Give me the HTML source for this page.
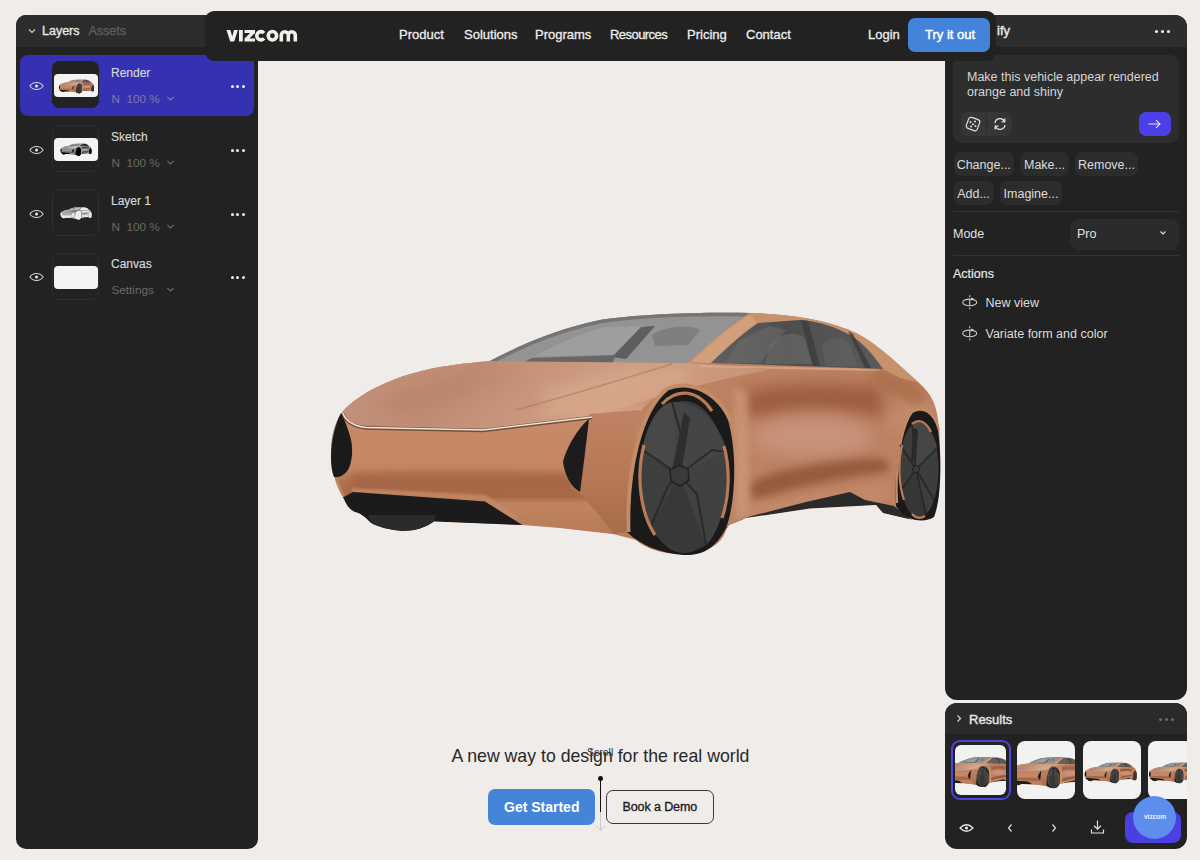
<!DOCTYPE html>
<html><head><meta charset="utf-8">
<style>
*{box-sizing:border-box;margin:0;padding:0}
html,body{width:1200px;height:860px;overflow:hidden}
body{background:#efece9;font-family:"Liberation Sans",sans-serif;position:relative;color:#e6e6e6}
.abs{position:absolute}
.panel{position:absolute;background:#222222;overflow:hidden}
#left{left:16px;top:15px;width:242px;height:834px;border-radius:10px}
#left .hdr{position:absolute;left:0;top:0;width:100%;height:32px;background:#2c2c2d}
.t{position:absolute;white-space:nowrap;line-height:1}
.row{position:absolute;left:4px;width:234px;height:61px;border-radius:8px}
.row.sel{background:#3432b2}
.thumb{position:absolute;left:32px;top:6px;width:47px;height:47px;border-radius:7px;border:1px solid #2e2e2e}
.sel .thumb{background:#222;border-color:#222}
.timg{position:absolute;left:1px;top:12px;width:44px;height:23px;border-radius:4px;background:#f4f4f4;overflow:hidden}
.rname{left:91px;top:11.5px;font-size:12px;color:#d8d8d8;-webkit-text-stroke:0.15px #d8d8d8}
.rsub{left:91.5px;top:37.5px;font-size:11.7px;color:#6a6a6a}
.sel .rsub{color:#7c79a6}
.dots{position:absolute;width:18px;height:4px}
.dots i{position:absolute;top:0;width:3.3px;height:3.3px;border-radius:50%;background:#f0f0f0}
#nav{left:205px;top:11px;width:791px;height:50px;border-radius:9px;background:#222222}
.navl{top:17px;font-size:13px;color:#ececec;-webkit-text-stroke:0.3px #ececec}
#try{position:absolute;left:703px;top:7px;width:82px;height:34px;border-radius:7px;background:#4384da}
#right{left:945px;top:15px;width:242px;height:685px;border-radius:12px}
#right .hdr{position:absolute;left:0;top:0;width:100%;height:32px;background:#2d2d2e}
#results{left:945px;top:703px;width:242px;height:146px;border-radius:12px}
#results .hdr{position:absolute;left:0;top:0;width:100%;height:31px;background:#2a2a2b}
.chip{position:absolute;height:24px;border-radius:7px;background:#2c2c2c;font-size:12.5px;color:#dcdcdc;padding-top:6px;text-align:center}
.divider{position:absolute;left:8px;width:226px;height:1px;background:#333}
</style></head><body>

<!-- CAR -->
<svg class="abs" style="left:0;top:0" width="1200" height="860" viewBox="0 0 1200 860">
<defs>
 <linearGradient id="gHood" x1="0" y1="0" x2="1" y2="0.15">
  <stop offset="0" stop-color="#c39079"/><stop offset="0.35" stop-color="#c08d76"/><stop offset="0.7" stop-color="#cf9f84"/><stop offset="1" stop-color="#c99477"/>
 </linearGradient>
 <linearGradient id="gFace" x1="0" y1="0" x2="0" y2="1">
  <stop offset="0" stop-color="#c78a69"/><stop offset="0.45" stop-color="#c48663"/><stop offset="0.55" stop-color="#b0714f"/><stop offset="0.68" stop-color="#a66846"/><stop offset="0.74" stop-color="#c08462"/><stop offset="1" stop-color="#b87b5a"/>
 </linearGradient>
 <linearGradient id="gGlass" x1="0" y1="0" x2="0.3" y2="1">
  <stop offset="0" stop-color="#9a9a9a"/><stop offset="1" stop-color="#7c7c7c"/>
 </linearGradient>
 <linearGradient id="gWin" x1="0" y1="0" x2="1" y2="0">
  <stop offset="0" stop-color="#606060"/><stop offset="0.45" stop-color="#4e4e4e"/><stop offset="1" stop-color="#5a5a5a"/>
 </linearGradient>
 <radialGradient id="gWheel" cx="0.45" cy="0.4" r="0.7">
  <stop offset="0" stop-color="#414141"/><stop offset="1" stop-color="#2f2f2f"/>
 </radialGradient>
 <linearGradient id="gFender" x1="0" y1="0" x2="0" y2="1"><stop offset="0" stop-color="#bf8262"/><stop offset="0.5" stop-color="#b77a59"/><stop offset="1" stop-color="#a66b4a"/></linearGradient>
 <filter id="blur8" x="-40%" y="-40%" width="180%" height="180%"><feGaussianBlur stdDeviation="9"/></filter>
 <filter id="blur4" x="-40%" y="-40%" width="180%" height="180%"><feGaussianBlur stdDeviation="4"/></filter>
 <linearGradient id="gFtop" x1="0" y1="0" x2="0" y2="1"><stop offset="0" stop-color="#d4a385" stop-opacity="0"/><stop offset="1" stop-color="#d6a687" stop-opacity="0.9"/></linearGradient>
 <filter id="blur1" x="-10%" y="-50%" width="120%" height="200%"><feGaussianBlur stdDeviation="1.2"/></filter>
 <filter id="blur3" x="-30%" y="-30%" width="160%" height="160%"><feGaussianBlur stdDeviation="3"/></filter>
 <filter id="blur6" x="-40%" y="-40%" width="180%" height="180%"><feGaussianBlur stdDeviation="7"/></filter>
 <clipPath id="cBody"><path d="M331,457 C330,435 336,418 345,409 C362,392 395,375 440,367 C465,363 480,362 490,361 C520,345 560,328 600,320 C640,314 700,312 750,313 C790,314 830,320 858,334 C880,346 900,366 918,382 C932,394 936,405 938,420 C941,440 941,480 938,500 C935,512 928,519 918,519 L911,519.5 L883,513 L876,505 L810,508.5 L746,518 L729,525 L726,530 C722,545 705,554 683,554 C660,554 645,548 636,540 L613,534 L560,528 L522,525 L434,521.5 C425,528 415,531 402,531 C390,530 378,527 371,523 C366,518 362,514 355,512 C350,510 347,506 344,499 C338,490 333,478 331,457 Z"/></clipPath>
</defs>
<g id="car">
<g clip-path="url(#cBody)">
<rect x="320" y="300" width="630" height="260" fill="#bd8262"/>
<!-- hood top -->
<path fill="url(#gHood)" d="M330,412 C360,390 395,372 440,365 C465,361 480,360 490,359 L688,363 L730,366 L770,370 C720,378 665,395 640,402 C620,409 600,414 591,417 L483,430 C440,428 390,426 345,424 Z"/>
<path fill="#dcae90" opacity="0.55" filter="url(#blur6)" d="M540,392 C580,378 630,368 700,370 C670,386 630,402 595,410 L550,412 Z"/>
<path fill="#a97354" opacity="0.3" filter="url(#blur8)" d="M380,400 C420,382 470,372 520,370 C480,386 440,400 400,418 Z"/>
<path fill="#d6a687" opacity="0.7" filter="url(#blur3)" d="M525,415 C580,400 630,385 680,370 L690,380 C650,395 620,410 595,416 Z"/>
<path fill="none" stroke="#a36a4a" stroke-width="1.4" opacity="0.45" d="M516,410 C560,398 620,380 672,364"/>
<!-- front face -->
<path fill="url(#gFace)" d="M338,420 L360,427 L483,431 L591,417 C580,430 566,450 563,468 C566,480 572,488 578,492 C600,505 620,515 629,532 L613,534 L520,523 L485,504 L420,498 L345,496 C336,480 333,450 338,420 Z"/>
<path fill="#9c603f" opacity="0.55" filter="url(#blur3)" d="M352,472 C420,470 500,470 566,472 L576,488 C520,490 420,490 352,489 Z"/>
<!-- fender block -->
<path fill="url(#gFtop)" d="M560,400 C600,392 640,386 672,383 C660,392 648,402 641,411 L589,414 L575,415 Z"/>
<path fill="#9f6543" opacity="0.55" filter="url(#blur3)" d="M600,470 L628,470 L628,532 L603,520 Z"/>
<!-- fender highlight right of intake -->
<path fill="url(#gFender)" d="M589,414 L640,410 C633,440 628,480 628,532 L613,534 C605,520 590,505 578,492 C580,470 584,440 589,414 Z"/>

<!-- shoulder shadow -->
<path fill="#8e4d2f" opacity="0.75" filter="url(#blur8)" d="M745,392 C790,382 870,382 910,396 C915,410 905,418 880,416 C840,410 790,408 755,418 C740,415 738,400 745,392 Z"/>
<!-- light door panel -->
<ellipse cx="812" cy="436" rx="62" ry="21" fill="#c99680" opacity="0.85" filter="url(#blur8)"/>
<!-- sculpt shadow -->
<path fill="#8a4d31" opacity="0.75" filter="url(#blur4)" d="M752,482 C780,468 830,460 878,458 C888,460 892,466 888,472 C850,476 800,486 755,500 C748,496 748,488 752,482 Z"/>
<!-- sill highlight -->
<path fill="#c58d6d" opacity="0.7" filter="url(#blur4)" d="M748,506 C790,497 840,489 885,484 L893,500 L748,517 Z"/>
<!-- fender strip behind front wheel -->
<path fill="#cf9a78" opacity="0.7" filter="url(#blur3)" d="M733,388 L748,392 L750,515 L735,520 Z"/>
<!-- rear haunch highlight -->
<path fill="#d3a080" opacity="0.55" filter="url(#blur6)" d="M880,390 C905,392 925,398 932,410 L920,420 L885,430 Z"/>
<!-- beltline light -->
<path fill="none" stroke="#d9aa8a" stroke-width="2" opacity="0.8" d="M700,366 L880,370"/>
<path fill="#c38966" opacity="0.85" filter="url(#blur1)" d="M352,488 L486,495 L520,518 L510,520 L485,501.5 L352,493 Z"/>
<path fill="#a66a47" opacity="0.6" filter="url(#blur4)" d="M878,366 C895,370 915,380 928,395 L918,408 C900,396 885,388 868,380 Z"/>
<!-- front-left underbody black -->
<path fill="#1b1b1b" d="M340,499 L353,492 L485,501.5 L524,526 L434,521.5 C425,528 415,531 402,531 C390,530 378,527 371,523 C366,518 362,514 355,512 C350,510 347,506 340,499 Z"/>
<path fill="#2b2b2b" d="M368,515 L436,515 L434,521.5 C425,528 415,531 402,531 C390,530 378,527 371,523 Z"/>
<!-- rocker dark -->
<path fill="#2a2a2a" d="M726,530 L729,525 L748,517 L806,502 L850,492 L865,500 L894,506 L911,520 L883,513 L876,505 L810,508.5 L746,518 Z"/>
</g>
<!-- left intake -->
<path fill="#1a1a1a" d="M341,413 C336,422 331,440 331,457 C331,466 332,472 334,477 C340,478 346,474 349,468 C353,458 353,446 350,436 C347,426 344,418 341,413 Z"/>
<!-- right intake -->
<path fill="#1c1c1c" d="M589,419 C578,428 566,448 563,462 C565,476 571,487 580,492 C583,470 586,445 589,419 Z"/>
<!-- chrome strip -->
<path fill="none" stroke="#5e3f30" stroke-width="3.4" opacity="0.8" d="M343,414 C346,422 355,427 366,428 L483,430.5 L592,417.5"/>
<path fill="none" stroke="#eee4d9" stroke-width="1.6" d="M343,413.5 C346,421.5 355,426.5 366,427.5 L483,430 L592,417"/>
<!-- windshield glass -->
<clipPath id="cGlass"><path d="M490,361 C520,345 560,328 600,320 C640,314 700,312 750,313 C735,322 710,342 688,363 Z"/></clipPath>
<g clip-path="url(#cGlass)">
<rect x="480" y="305" width="280" height="60" fill="#939393"/>
<path fill="none" stroke="#757575" stroke-width="7" d="M490,361 C520,345 560,328 600,320 C640,314 700,312 750,313"/>
<path fill="#a3a3a3" opacity="0.7" d="M535,356 C560,342 585,332 605,327 L645,326 L618,355 Z"/>
<path fill="#5e5e5e" d="M612,357 L641,327 L655,326 L626,359 Z"/>
<path fill="#676767" d="M532,358 L616,355 L612,364 L520,364 Z"/>
<path fill="#7a7a7a" opacity="0.8" d="M652,335 C665,326 690,324 700,330 L688,345 L655,346 Z"/>
</g>
<!-- roof rail copper -->
<path fill="#c7916c" d="M688,363 C710,342 735,322 750,313 C790,314 830,320 858,334 C880,346 900,366 918,382 L900,378 L883,369 C870,350 858,338 844,332 C830,325 815,321 800,320 L758,323 C740,335 725,350 711,363 Z"/>
<path fill="#d4a282" opacity="0.8" d="M692,362 C712,342 736,322 750,315 L757,322 C740,335 724,350 710,363 Z"/>
<!-- side window -->
<path fill="url(#gWin)" d="M711,363 C725,350 740,335 758,323 L800,320 C815,321 830,325 844,332 C858,338 870,350 883,369 Z"/>
<path fill="#3a3a3a" opacity="0.7" d="M801,320 L808,321 L820,366 L813,366 Z"/>
<path fill="#707070" opacity="0.45" d="M740,340 L770,326 L786,330 L760,363 L725,363 Z"/>
<path fill="#6a6a6a" opacity="0.6" d="M770,345 C780,332 800,330 805,340 L812,364 L765,364 Z"/>
<path fill="#3c3c3c" opacity="0.8" d="M848,331 L853,334 L871,368 L865,368 Z"/>
<path fill="#656565" opacity="0.5" d="M822,345 C830,336 845,336 850,345 L858,366 L825,366 Z"/>
<!-- front wheel arch/gap -->
<path fill="#1a1a1a" d="M627,532 C625,470 640,410 668,388 C690,380 715,390 728,420 C738,455 735,505 726,528 C715,550 700,556 683,555 C660,553 640,545 627,532 Z"/>
<path fill="none" stroke="#c48b67" stroke-width="4" d="M628.5,532 C626.5,470 640.5,410 667.5,388.5 C690,380 717,391 731,421"/>
<ellipse cx="684" cy="477" rx="43" ry="76" fill="#3a3a3a"/>
<path fill="#454545" d="M679,475 L672,402 C700,400 720,425 727,452 Z"/>
<path fill="#414141" d="M679,475 L727,452 C730,490 722,530 706,545 Z"/>
<path fill="#383838" d="M679,475 L706,545 C690,556 665,548 650,528 Z"/>
<path fill="#3e3e3e" d="M679,475 L650,528 C640,505 638,475 642,450 Z"/>
<path fill="#484848" d="M679,475 L642,450 C648,420 660,404 672,402 Z"/>
<path fill="none" stroke="#2a2a2a" stroke-width="2" d="M679,475 L684,445 L672,402 M679,475 L712,450 L727,452 M679,475 L697,494 L706,545 M679,475 L668,486 L650,528 M679,475 L649,454 L642,450"/>
<path fill="#2e2e2e" d="M684,412 L690,418 L682,468 L672,470 Z"/>
<path fill="#3a3a3a" stroke="#222" stroke-width="1.5" d="M679,465 L688,469 L689,480 L680,486 L671,481 L670,470 Z"/>
<path fill="none" stroke="#b97b55" stroke-width="3.2" d="M662,404 A43,76 0 0,1 712,411 M724,446 A43,76 0 0,1 722,518 M655,535 A43,76 0 0,1 644,445"/>
<!-- rear wheel -->
<path fill="#1a1a1a" d="M896,506 C894,470 899,428 912,412 C922,406 934,412 938,430 C942,460 941,500 934,517 C925,523 905,522 896,506 Z"/>
<path fill="none" stroke="#c48b67" stroke-width="2.2" d="M897,503 C895,470 900,428 912,412 C922,406 934,411 939,430"/>
<ellipse cx="919" cy="469.5" rx="19.5" ry="48" fill="#3d3d3d"/>
<path fill="#464646" d="M916,469 L912,423 C925,420 934,432 937,448 Z"/>
<path fill="#363636" d="M916,469 L926,515 C915,520 905,508 901,490 Z"/>
<path fill="none" stroke="#262626" stroke-width="1.6" d="M916,469 L912,423 M916,469 L937,448 M916,469 L934,500 M916,469 L926,515 M916,469 L901,490 M916,469 L900,445"/>
<path fill="#2a2a2a" d="M913,428 L918,430 L916,462 L911,462 Z"/>
<circle cx="916" cy="469" r="3.5" fill="#3a3a3a" stroke="#222" stroke-width="1"/>
<path fill="none" stroke="#b97b55" stroke-width="2.2" d="M912,424 A19.5,48 0 0,1 931,432 M902,445 A19.5,48 0 0,0 904,500 M912,514 A19.5,48 0 0,0 925,516"/>
</g>
</svg>

<!-- LEFT PANEL -->
<div id="left" class="panel">
  <div class="hdr"></div>
  <svg class="abs" style="left:11px;top:12px" width="10" height="8" viewBox="0 0 10 8"><path d="M2 2.5 L5 5.5 L8 2.5" stroke="#cfcfcf" stroke-width="1.2" fill="none"/></svg>
  <div class="t" style="left:26px;top:10px;font-size:12.5px;color:#e8e8e8;-webkit-text-stroke:0.35px #e8e8e8">Layers</div>
  <div class="t" style="left:72.5px;top:10px;font-size:12.5px;color:#5c5c5c;-webkit-text-stroke:0.35px #5c5c5c">Assets</div>
  <div class="row sel" style="top:40px">
    <svg class="abs" style="left:8.5px;top:25.5px" width="15" height="10" viewBox="0 0 15 10"><path d="M0.9 5 C4 0.4 11 0.4 14.1 5 C11 9.6 4 9.6 0.9 5Z" stroke="#d4d4d4" stroke-width="1.1" fill="none"/><circle cx="7.5" cy="5" r="1.5" fill="#e8e8e8"/></svg>
    <div class="thumb"><div class="timg"><svg width="44" height="23" viewBox="246 218 765 400"><use href="#car"/></svg></div></div>
    <div class="t rname">Render</div>
    <div class="t rsub">N&nbsp;&nbsp;100&nbsp;%</div>
    <svg class="abs" style="left:145.5px;top:39.5px" width="9" height="7" viewBox="0 0 9 7"><path d="M1.3 2 L4.5 5 L7.7 2" stroke="#7c79a6" stroke-width="1.1" fill="none"/></svg>
    <div class="dots" style="left:210.5px;top:29.5px"><i style="left:0"></i><i style="left:5.5px"></i><i style="left:11px"></i></div>
  </div>
  <div class="row" style="top:104px">
    <svg class="abs" style="left:8.5px;top:25.5px" width="15" height="10" viewBox="0 0 15 10"><path d="M0.9 5 C4 0.4 11 0.4 14.1 5 C11 9.6 4 9.6 0.9 5Z" stroke="#d4d4d4" stroke-width="1.1" fill="none"/><circle cx="7.5" cy="5" r="1.5" fill="#e8e8e8"/></svg>
    <div class="thumb"><div class="timg"><svg width="44" height="23" viewBox="203 206 864 452" style="filter:grayscale(1) brightness(0.95) contrast(1.8)"><use href="#car"/></svg></div></div>
    <div class="t rname">Sketch</div>
    <div class="t rsub">N&nbsp;&nbsp;100&nbsp;%</div>
    <svg class="abs" style="left:145.5px;top:39.5px" width="9" height="7" viewBox="0 0 9 7"><path d="M1.3 2 L4.5 5 L7.7 2" stroke="#6a6a6a" stroke-width="1.1" fill="none"/></svg>
    <div class="dots" style="left:210.5px;top:29.5px"><i style="left:0"></i><i style="left:5.5px"></i><i style="left:11px"></i></div>
  </div>
  <div class="row" style="top:168px">
    <svg class="abs" style="left:8.5px;top:25.5px" width="15" height="10" viewBox="0 0 15 10"><path d="M0.9 5 C4 0.4 11 0.4 14.1 5 C11 9.6 4 9.6 0.9 5Z" stroke="#d4d4d4" stroke-width="1.1" fill="none"/><circle cx="7.5" cy="5" r="1.5" fill="#e8e8e8"/></svg>
    <div class="thumb"><div class="timg" style="background:transparent"><svg width="44" height="23" viewBox="203 210 864 452" style="filter:grayscale(1) invert(1) brightness(1.6) contrast(1.2);opacity:0.9"><use href="#car"/></svg></div></div>
    <div class="t rname">Layer 1</div>
    <div class="t rsub">N&nbsp;&nbsp;100&nbsp;%</div>
    <svg class="abs" style="left:145.5px;top:39.5px" width="9" height="7" viewBox="0 0 9 7"><path d="M1.3 2 L4.5 5 L7.7 2" stroke="#6a6a6a" stroke-width="1.1" fill="none"/></svg>
    <div class="dots" style="left:210.5px;top:29.5px"><i style="left:0"></i><i style="left:5.5px"></i><i style="left:11px"></i></div>
  </div>
  <div class="row" style="top:231.5px">
    <svg class="abs" style="left:8.5px;top:25.5px" width="15" height="10" viewBox="0 0 15 10"><path d="M0.9 5 C4 0.4 11 0.4 14.1 5 C11 9.6 4 9.6 0.9 5Z" stroke="#d4d4d4" stroke-width="1.1" fill="none"/><circle cx="7.5" cy="5" r="1.5" fill="#e8e8e8"/></svg>
    <div class="thumb"><div class="timg"></div></div>
    <div class="t rname">Canvas</div>
    <div class="t rsub">Settings</div>
    <svg class="abs" style="left:145.5px;top:39.5px" width="9" height="7" viewBox="0 0 9 7"><path d="M1.3 2 L4.5 5 L7.7 2" stroke="#6a6a6a" stroke-width="1.1" fill="none"/></svg>
    <div class="dots" style="left:210.5px;top:29.5px"><i style="left:0"></i><i style="left:5.5px"></i><i style="left:11px"></i></div>
  </div>
</div>

<!-- RIGHT PANEL -->
<div id="right" class="panel">
  <div class="hdr"></div>
  <div class="t" style="left:52px;top:9px;font-size:13px;color:#ececec;-webkit-text-stroke:0.4px #ececec">ify</div>
  <div class="dots" style="left:210px;top:14.6px"><i style="left:0"></i><i style="left:6px"></i><i style="left:12px"></i></div>
  <div class="abs" style="left:8px;top:40px;width:226px;height:88px;border-radius:9px;background:#2d2d2d"></div>
  <div class="t" style="left:22px;top:55px;font-size:12.5px;line-height:15.4px;color:#d6d6d6;white-space:normal;width:200px">Make this vehicle appear rendered orange and shiny</div>
  <div class="abs" style="left:15.5px;top:96.5px;width:51.5px;height:24px;border-radius:7px;background:#363636"></div><div class="abs" style="left:41px;top:99px;width:1px;height:19px;background:#2c2c2c"></div>
  <svg class="abs" style="left:19px;top:100px" width="18" height="18" viewBox="0 0 18 18"><rect x="3.2" y="3.2" width="11.6" height="11.6" rx="2.5" transform="rotate(20 9 9)" stroke="#e0e0e0" stroke-width="1.2" fill="none"/><circle cx="6.5" cy="7" r="1" fill="#e0e0e0"/><circle cx="11" cy="6.5" r="1" fill="#e0e0e0"/><circle cx="9" cy="9.2" r="1" fill="#e0e0e0"/><circle cx="7" cy="11.5" r="1" fill="#e0e0e0"/><circle cx="11.5" cy="11" r="1" fill="#e0e0e0"/></svg>
  <svg class="abs" style="left:47px;top:101px" width="16" height="16" viewBox="0 0 16 16"><path d="M3 7 A5 5 0 0 1 12.5 5.5 M13 9 A5 5 0 0 1 3.5 10.5" stroke="#e0e0e0" stroke-width="1.3" fill="none"/><path d="M12.8 2.5 L12.8 5.8 L9.6 5.8 M3.2 13.5 L3.2 10.2 L6.4 10.2" stroke="#e0e0e0" stroke-width="1.3" fill="none"/></svg>
  <div class="abs" style="left:193.5px;top:97px;width:32px;height:24px;border-radius:7px;background:#4b40e8"></div>
  <svg class="abs" style="left:202px;top:102px" width="15" height="14" viewBox="0 0 15 14"><path d="M1.5 7 H13 M9 3.2 L13 7 L9 10.8" stroke="#e4e2ff" stroke-width="1.1" fill="none"/></svg>
  <div class="chip" style="left:8.5px;top:136.5px;width:60.5px">Change...</div>
  <div class="chip" style="left:75px;top:136.5px;width:49px">Make...</div>
  <div class="chip" style="left:130px;top:136.5px;width:63px">Remove...</div>
  <div class="chip" style="left:8.5px;top:166px;width:40px">Add...</div>
  <div class="chip" style="left:55px;top:166px;width:62px">Imagine...</div>
  <div class="divider" style="top:196px"></div>
  <div class="t" style="left:8px;top:213px;font-size:12.5px;color:#e0e0e0">Mode</div>
  <div class="abs" style="left:124.5px;top:203.5px;width:109px;height:31px;border-radius:8px;background:#2b2b2b"></div>
  <div class="t" style="left:132px;top:212.5px;font-size:12.5px;color:#e0e0e0">Pro</div>
  <svg class="abs" style="left:214px;top:215px" width="8" height="6" viewBox="0 0 8 6"><path d="M1.5 1.5 L4 4 L6.5 1.5" stroke="#ddd" stroke-width="1.2" fill="none"/></svg>
  <div class="divider" style="top:240px"></div>
  <div class="t" style="left:8px;top:252.5px;font-size:12.5px;color:#e6e6e6;-webkit-text-stroke:0.2px #e6e6e6">Actions</div>
  <svg class="abs" style="left:16px;top:279px" width="18" height="17" viewBox="0 0 18 17"><ellipse cx="8.7" cy="8.4" rx="7" ry="3.3" stroke="#cdcdcd" stroke-width="1.1" fill="none"/><path d="M8.7,1.3 V3.3 M8.7,5.2 V11.6 M8.7,13.4 V15.2" stroke="#cdcdcd" stroke-width="1.1"/><path d="M10.3,3.6 L13.2,5.1 L10.3,6.6 Z" fill="#e0e0e0"/></svg>
  <div class="t" style="left:40.5px;top:281.5px;font-size:12.5px;color:#dcdcdc">New view</div>
  <svg class="abs" style="left:16px;top:310px" width="18" height="17" viewBox="0 0 18 17"><ellipse cx="8.7" cy="8.4" rx="7" ry="3.3" stroke="#cdcdcd" stroke-width="1.1" fill="none"/><path d="M8.7,1.3 V3.3 M8.7,5.2 V11.6 M8.7,13.4 V15.2" stroke="#cdcdcd" stroke-width="1.1"/><path d="M10.3,3.6 L13.2,5.1 L10.3,6.6 Z" fill="#e0e0e0"/></svg>
  <div class="t" style="left:40.5px;top:313px;font-size:12.5px;color:#dcdcdc">Variate form and color</div>
</div>

<!-- RESULTS -->
<div id="results" class="panel">
  <div class="hdr"></div>
  <svg class="abs" style="left:10px;top:11px" width="8" height="9" viewBox="0 0 8 9"><path d="M2.5 1.5 L5.5 4.5 L2.5 7.5" stroke="#cfcfcf" stroke-width="1.3" fill="none"/></svg>
  <div class="t" style="left:24px;top:9.5px;font-size:13px;color:#e6e6e6;-webkit-text-stroke:0.4px #e6e6e6">Results</div>
  <div class="dots" style="left:214px;top:14.6px"><i style="left:0;background:#6a6a6a;width:3px;height:3px"></i><i style="left:6px;background:#6a6a6a;width:3px;height:3px"></i><i style="left:12px;background:#6a6a6a;width:3px;height:3px"></i></div>
  <div class="abs" style="left:6px;top:37px;width:60px;height:60px;border-radius:9px;border:2.5px solid #4b45e0;background:#222"></div>
  <div class="abs" id="rt1" style="left:10px;top:42px;width:51px;height:50px;border-radius:6px;background:#f2f2f2;overflow:hidden"><svg width="51" height="50" viewBox="459 217 410 402"><use href="#car"/></svg></div>
  <div class="abs" id="rt2" style="left:72px;top:38px;width:58px;height:58px;border-radius:8px;background:#f2f2f2;overflow:hidden"><svg width="58" height="58" viewBox="400 187 451 451"><use href="#car"/></svg></div>
  <div class="abs" id="rt3" style="left:137.5px;top:38px;width:58px;height:58px;border-radius:8px;background:#f2f2f2;overflow:hidden"><svg width="58" height="58" viewBox="312 61 679 679"><use href="#car"/></svg></div>
  <div class="abs" id="rt4" style="left:203px;top:38px;width:58px;height:58px;border-radius:8px;background:#f2f2f2;overflow:hidden"><svg width="58" height="58" viewBox="319 61 679 679"><use href="#car"/></svg></div>
  <svg class="abs" style="left:14px;top:120px" width="15" height="10" viewBox="0 0 15 10"><path d="M1 5 Q7.5 -1.5 14 5 Q7.5 11.5 1 5Z" stroke="#e6e6e6" stroke-width="1.2" fill="none"/><circle cx="7.5" cy="5" r="1.6" fill="#e6e6e6"/></svg>
  <svg class="abs" style="left:61px;top:120px" width="8" height="10" viewBox="0 0 8 10"><path d="M5.5 1.5 L2.5 5 L5.5 8.5" stroke="#ddd" stroke-width="1.2" fill="none"/></svg>
  <svg class="abs" style="left:105px;top:120px" width="8" height="10" viewBox="0 0 8 10"><path d="M2.5 1.5 L5.5 5 L2.5 8.5" stroke="#ddd" stroke-width="1.2" fill="none"/></svg>
  <svg class="abs" style="left:145px;top:116px" width="15" height="16" viewBox="0 0 15 16"><path d="M7.5 1.5 V10 M4 6.8 L7.5 10.2 L11 6.8 M1.5 10.5 V14 H13.5 V10.5" stroke="#e0e0e0" stroke-width="1.2" fill="none"/></svg>
  <div class="abs" style="left:180px;top:109px;width:56px;height:31px;border-radius:8px;background:#4a3fe0"></div>
  <div class="abs" style="left:188px;top:92.5px;width:43px;height:43px;border-radius:50%;background:#5d8ded"></div>
  <div class="t" style="left:199px;top:110.5px;font-size:6.5px;font-weight:bold;color:#eef">vizcom</div>
</div>
<!-- CENTER -->
<div class="t" style="left:451.5px;top:748px;font-size:17.7px;color:#282828">A new way to design for the real world</div>
<div class="t" style="left:587px;top:747px;font-size:10.5px;color:#333">Scroll</div>
<div class="abs" style="left:599.5px;top:778px;width:1.5px;height:34px;background:#111"></div>
<div class="abs" style="left:597.5px;top:775.5px;width:5.5px;height:5.5px;border-radius:50%;background:#111"></div>
<div class="abs" style="left:600px;top:812px;width:1px;height:18px;background:#cdc9c5"></div><svg class="abs" style="left:594px;top:823px" width="13" height="9" viewBox="0 0 13 9"><path d="M2,3 L6.5,7.5 L11,3" stroke="#cdc9c5" stroke-width="1" fill="none"/></svg>
<div class="abs" style="left:488px;top:789px;width:107px;height:36px;border-radius:7px;background:#4485da"></div>
<div class="t" style="left:504px;top:800px;font-size:14px;font-weight:bold;color:#fff">Get Started</div>
<div class="abs" style="left:605.5px;top:790px;width:108.5px;height:34px;border-radius:7px;border:1.5px solid #3a3a3a"></div>
<div class="t" style="left:622.5px;top:801px;font-size:12.5px;letter-spacing:-0.1px;color:#1e1e1e;-webkit-text-stroke:0.35px #1e1e1e">Book a Demo</div>


<!-- NAV -->
<div id="nav" class="panel">
  <svg class="abs" style="left:21px;top:18px" width="73" height="14" viewBox="0 0 73 14"><g fill="#f3efe9"><path d="M0.5,1 L4.4,1 L6.2,7.6 L8,1 L11.9,1 L8.2,12.5 L4.2,12.5 Z"/><rect x="13" y="1" width="3.8" height="11.5"/><path d="M18.5,1 L29,1 L29,4 L23.4,9.5 L29,9.5 L29,12.5 L18.5,12.5 L18.5,9.5 L24.1,4 L18.5,4 Z"/></g><g fill="none" stroke="#f3efe9" stroke-width="3.6"><path d="M38,4.1 A4.1,4.1 0 1 0 38,9.4"/><circle cx="46.4" cy="6.75" r="4.2"/><path d="M55.3,12.5 V6.3 A3.5,3.5 0 0 1 62.3,6.3 V12.5 M62.3,6.3 A3.5,3.5 0 0 1 69.3,6.3 V12.5"/></g></svg>
  <div class="t navl" style="left:194px">Product</div>
  <div class="t navl" style="left:259px">Solutions</div>
  <div class="t navl" style="left:330px">Programs</div>
  <div class="t navl" style="left:405px;letter-spacing:-0.55px">Resources</div>
  <div class="t navl" style="left:482px">Pricing</div>
  <div class="t navl" style="left:541px">Contact</div>
  <div class="t navl" style="left:663px">Login</div>
  <div id="try"><div class="t" style="left:17px;top:9.5px;font-size:13px;color:#fff;-webkit-text-stroke:0.45px #fff">Try it out</div></div>
</div>

</body></html>
